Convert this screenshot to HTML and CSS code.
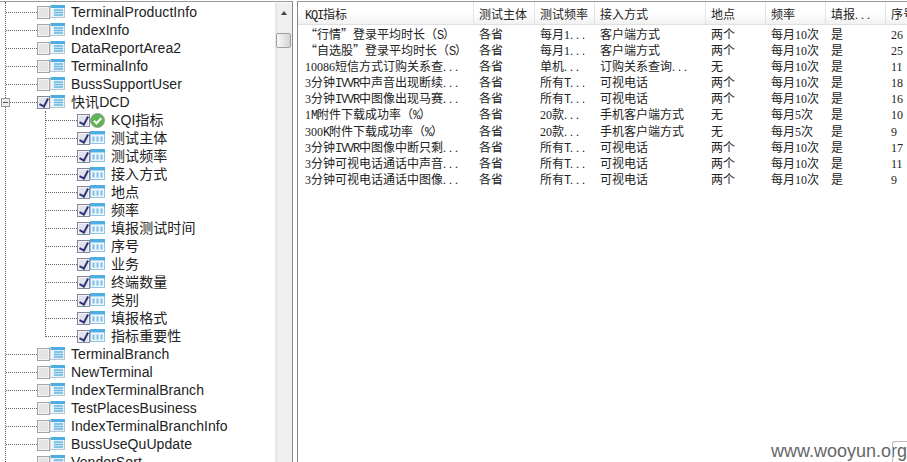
FILE: index.html
```html
<!DOCTYPE html>
<html lang="zh">
<head>
<meta charset="utf-8">
<title>KQI</title>
<link rel="stylesheet" href="styles.css">
</head>
<body>
<svg class="defs" width="0" height="0" aria-hidden="true">
  <symbol id="tbl" viewBox="0 0 15 13">
    <rect x=".5" y=".5" width="14" height="12" fill="#e4f1f8" stroke="#b9c6cf"/>
    <rect x="1" y="0" width="14" height="3" fill="#4eaee4"/>
    <path d="M4 5h9M4 7.5h9M4 10h9" stroke="#62b6df" stroke-width="1.4"/>
    <rect x=".5" y="3" width="2" height="9" fill="#f4f8fa"/>
  </symbol>
  <symbol id="col" viewBox="0 0 15 13">
    <rect x=".5" y=".5" width="14" height="12" fill="#eef6fb" stroke="#8fc5e6"/>
    <rect x="0" y="0" width="15" height="3.4" fill="#4eaee4"/>
    <path d="M3.5 5.5v5M7.5 5.5v5M11.5 5.5v5" stroke="#7dbde6" stroke-width="2"/>
  </symbol>
  <symbol id="ok" viewBox="0 0 15 15">
    <circle cx="7.5" cy="7.5" r="7" fill="#5ab552" stroke="#9a9f9a"/>
    <path d="M3.8 7.6l2.7 2.7 4.8-5" fill="none" stroke="#fff" stroke-width="2"/>
  </symbol>
</svg>
<div class="app">
  <section class="tree">
    <div class="tree-scroll">
      <div class="node"><span class="h"></span><span class="cb"></span><svg class="ic"><use href="#tbl"/></svg><span class="name">TerminalProductInfo</span></div>
      <div class="node"><span class="h"></span><span class="cb"></span><svg class="ic"><use href="#tbl"/></svg><span class="name">IndexInfo</span></div>
      <div class="node"><span class="h"></span><span class="cb"></span><svg class="ic"><use href="#tbl"/></svg><span class="name">DataReportArea2</span></div>
      <div class="node"><span class="h"></span><span class="cb"></span><svg class="ic"><use href="#tbl"/></svg><span class="name">TerminalInfo</span></div>
      <div class="node"><span class="h"></span><span class="cb"></span><svg class="ic"><use href="#tbl"/></svg><span class="name">BussSupportUser</span></div>
      <div class="node"><span class="h"></span><span class="exp"></span><span class="cb on"></span><svg class="ic"><use href="#tbl"/></svg><span class="name">快讯DCD</span></div>
      <div class="kids">
        <div class="node kid"><span class="h"></span><span class="cb on"></span><svg class="ic okc"><use href="#ok"/></svg><span class="name">KQI指标</span></div>
        <div class="node kid"><span class="h"></span><span class="cb on"></span><svg class="ic"><use href="#col"/></svg><span class="name">测试主体</span></div>
        <div class="node kid"><span class="h"></span><span class="cb on"></span><svg class="ic"><use href="#col"/></svg><span class="name">测试频率</span></div>
        <div class="node kid"><span class="h"></span><span class="cb on"></span><svg class="ic"><use href="#col"/></svg><span class="name">接入方式</span></div>
        <div class="node kid"><span class="h"></span><span class="cb on"></span><svg class="ic"><use href="#col"/></svg><span class="name">地点</span></div>
        <div class="node kid"><span class="h"></span><span class="cb on"></span><svg class="ic"><use href="#col"/></svg><span class="name">频率</span></div>
        <div class="node kid"><span class="h"></span><span class="cb on"></span><svg class="ic"><use href="#col"/></svg><span class="name">填报测试时间</span></div>
        <div class="node kid"><span class="h"></span><span class="cb on"></span><svg class="ic"><use href="#col"/></svg><span class="name">序号</span></div>
        <div class="node kid"><span class="h"></span><span class="cb on"></span><svg class="ic"><use href="#col"/></svg><span class="name">业务</span></div>
        <div class="node kid"><span class="h"></span><span class="cb on"></span><svg class="ic"><use href="#col"/></svg><span class="name">终端数量</span></div>
        <div class="node kid"><span class="h"></span><span class="cb on"></span><svg class="ic"><use href="#col"/></svg><span class="name">类别</span></div>
        <div class="node kid"><span class="h"></span><span class="cb on"></span><svg class="ic"><use href="#col"/></svg><span class="name">填报格式</span></div>
        <div class="node kid"><span class="h"></span><span class="cb on"></span><svg class="ic"><use href="#col"/></svg><span class="name">指标重要性</span></div>
      </div>
      <div class="node"><span class="h"></span><span class="cb"></span><svg class="ic"><use href="#tbl"/></svg><span class="name">TerminalBranch</span></div>
      <div class="node"><span class="h"></span><span class="cb"></span><svg class="ic"><use href="#tbl"/></svg><span class="name">NewTerminal</span></div>
      <div class="node"><span class="h"></span><span class="cb"></span><svg class="ic"><use href="#tbl"/></svg><span class="name">IndexTerminalBranch</span></div>
      <div class="node"><span class="h"></span><span class="cb"></span><svg class="ic"><use href="#tbl"/></svg><span class="name">TestPlacesBusiness</span></div>
      <div class="node"><span class="h"></span><span class="cb"></span><svg class="ic"><use href="#tbl"/></svg><span class="name">IndexTerminalBranchInfo</span></div>
      <div class="node"><span class="h"></span><span class="cb"></span><svg class="ic"><use href="#tbl"/></svg><span class="name">BussUseQuUpdate</span></div>
      <div class="node"><span class="h"></span><span class="cb"></span><svg class="ic"><use href="#tbl"/></svg><span class="name">VendorSort</span></div>
    </div>
    <div class="sbar"><span class="up"></span><span class="thumb"></span></div>
  </section>
  <section class="grid">
    <div class="row head">
      <div><em>KQI</em>指标</div><div>测试主体</div><div>测试频率</div><div>接入方式</div><div>地点</div><div>频率</div><div>填报<span class="d">...</span></div><div>序号</div>
    </div>
    <div class="row"><div>“行情”登录平均时长（<em>S</em>）</div><div>各省</div><div>每月<i>1</i><span class="d">...</span></div><div>客户端方式</div><div>两个</div><div>每月<i>10</i>次</div><div>是</div><div><i>26</i></div></div>
    <div class="row"><div>“自选股”登录平均时长（<em>S</em>）</div><div>各省</div><div>每月<i>1</i><span class="d">...</span></div><div>客户端方式</div><div>两个</div><div>每月<i>10</i>次</div><div>是</div><div><i>25</i></div></div>
    <div class="row"><div><i>10086</i>短信方式订购关系查<span class="d">...</span></div><div>各省</div><div>单机<span class="d">...</span></div><div>订购关系查询<span class="d">...</span></div><div>无</div><div>每月<i>10</i>次</div><div>是</div><div><i>11</i></div></div>
    <div class="row"><div><i>3</i>分钟<em>IVVR</em>中声音出现断续<span class="d">...</span></div><div>各省</div><div>所有<em>T</em><span class="d">...</span></div><div>可视电话</div><div>两个</div><div>每月<i>10</i>次</div><div>是</div><div><i>18</i></div></div>
    <div class="row"><div><i>3</i>分钟<em>IVVR</em>中图像出现马赛<span class="d">...</span></div><div>各省</div><div>所有<em>T</em><span class="d">...</span></div><div>可视电话</div><div>两个</div><div>每月<i>10</i>次</div><div>是</div><div><i>16</i></div></div>
    <div class="row"><div><i>1</i><em>M</em>附件下载成功率（<em>%</em>）</div><div>各省</div><div><i>20</i>款<span class="d">...</span></div><div>手机客户端方式</div><div>无</div><div>每月<i>5</i>次</div><div>是</div><div><i>10</i></div></div>
    <div class="row"><div><i>300</i><em>K</em>附件下载成功率（<em>%</em>）</div><div>各省</div><div><i>20</i>款<span class="d">...</span></div><div>手机客户端方式</div><div>无</div><div>每月<i>5</i>次</div><div>是</div><div><i>9</i></div></div>
    <div class="row"><div><i>3</i>分钟<em>IVVR</em>中图像中断只剩<span class="d">...</span></div><div>各省</div><div>所有<em>T</em><span class="d">...</span></div><div>可视电话</div><div>两个</div><div>每月<i>10</i>次</div><div>是</div><div><i>17</i></div></div>
    <div class="row"><div><i>3</i>分钟可视电话通话中声音<span class="d">...</span></div><div>各省</div><div>所有<em>T</em><span class="d">...</span></div><div>可视电话</div><div>两个</div><div>每月<i>10</i>次</div><div>是</div><div><i>11</i></div></div>
    <div class="row"><div><i>3</i>分钟可视电话通话中图像<span class="d">...</span></div><div>各省</div><div>所有<em>T</em><span class="d">...</span></div><div>可视电话</div><div>两个</div><div>每月<i>10</i>次</div><div>是</div><div><i>9</i></div></div>
  </section>
</div>
<div class="mark">www.wooyun.org</div>
</body>
</html>
```
FILE: styles.css
```css
* { box-sizing: border-box; }
html, body { margin: 0; height: 100%; overflow: hidden; background: #fff; }
.defs { position: absolute; }
.app { display: flex; height: 462px; width: 907px; padding-top: 1px; gap: 4px; }

.tree {
  position: relative; display: flex; width: 293px; flex: none; overflow: hidden;
  border-top: 1px solid #9a9a9a; border-right: 1px solid #8a8a8a;
  font: 14px/18px "Liberation Sans", "Noto Sans CJK SC", sans-serif; color: #222;
}
.tree-scroll { flex: 1; padding-top: 1px; position: relative; overflow: hidden; }
.tree-scroll::before {
  content: ""; position: absolute; left: 5px; top: 0; bottom: 0;
  border-left: 1px dotted #666;
}
.node { display: flex; align-items: center; height: 18px; white-space: nowrap; position: relative; padding-left: 6px; }
.h { width: 31px; flex: none; border-top: 1px dotted #666; margin-top: 1px; }
.cb { width: 13px; height: 13px; flex: none; background: #e4e4e4; border: 1px solid #a4a4a4; box-shadow: inset 0 0 0 1px #f3f3f3; position: relative; margin-top: 1px; }
.cb.on { background: #e2e2ec; border-color: #85859c; }
.cb.on::after {
  content: ""; position: absolute; left: 3px; top: 0; width: 4px; height: 8px;
  border: solid #2e3478; border-width: 0 2px 2px 0; transform: rotate(28deg);
}
.ic { width: 15px; height: 13px; flex: none; margin-top: -1px; }
.ic.okc { height: 15px; margin-top: 1px; }
.name { margin-left: 6px; letter-spacing: .08px; }
.exp {
  position: absolute; left: 1px; top: 5px; width: 9px; height: 9px;
  background: #eee; border: 1px solid #9a9a9a;
}
.exp::after { content: ""; position: absolute; left: 1px; top: 3px; width: 5px; height: 1px; background: #555; }
.kids { position: relative; }
.kids::before {
  content: ""; position: absolute; left: 45px; top: 0; height: 226px;
  border-left: 1px dotted #666;
}
.kid { padding-left: 46px; }
.sbar { width: 17px; flex: none; background: linear-gradient(90deg, #e4e4e4, #f0f0f0 20%, #eeeeee); position: relative; margin-top: 1px; display: flex; flex-direction: column; align-items: center; }
.up { margin-top: 8px; border: 3px solid transparent; border-bottom: 4px solid #444; border-top: 0; }
.thumb {
  margin-top: 18px; width: 15px; height: 15px; border: 1px solid #a0a0a0; border-radius: 2px;
  background: linear-gradient(90deg, #f8f8f8, #d4d4d4);
}

.grid {
  flex: 1; min-width: 0; overflow: hidden;
  border-top: 1px solid #9a9a9a; border-left: 1px solid #7f8c95;
  font: 12px/16px "Noto Sans CJK SC", sans-serif; color: #222;
}
.row {
  display: grid;
  grid-template-columns: 168px 61px 60px 111px 60px 60px 60px 60px;
  height: 16.1px; padding-left: 7px;
  white-space: nowrap;
}
.row > div { padding-left: 6px; overflow: hidden; height: 16px; }
.row > div:first-child { padding-left: 0; }
.row i { font: 12px/16px "Liberation Serif", serif; }
.row em { font: 12px/16px "Liberation Mono", monospace; letter-spacing: -1.2px; }
.row .d { font: 12px/16px "Liberation Serif", serif; letter-spacing: 3px; }
.head {
  height: 23px; margin-bottom: 1px;
  background: linear-gradient(#fff 50%, #f1f1f1);
  border-bottom: 1px solid #e0e0e0;
}
.head > div { line-height: 24px; height: 22px; }
.head > div + div { border-left: 1px solid #e4e4e4; padding-left: 5px; }
.head em { line-height: 24px; }

.mark {
  position: absolute; right: 0; bottom: 1px; width: 137px; text-align: right;
  font: 18px/20px "Liberation Sans", sans-serif; color: #666; white-space: nowrap;
}
.mark::after {
  content: ""; position: absolute; right: 0; top: 0; width: 14px; height: 20px;
  border: solid #bbb; border-width: 1px 0 0 1px; border-top-left-radius: 3px;
}
```
